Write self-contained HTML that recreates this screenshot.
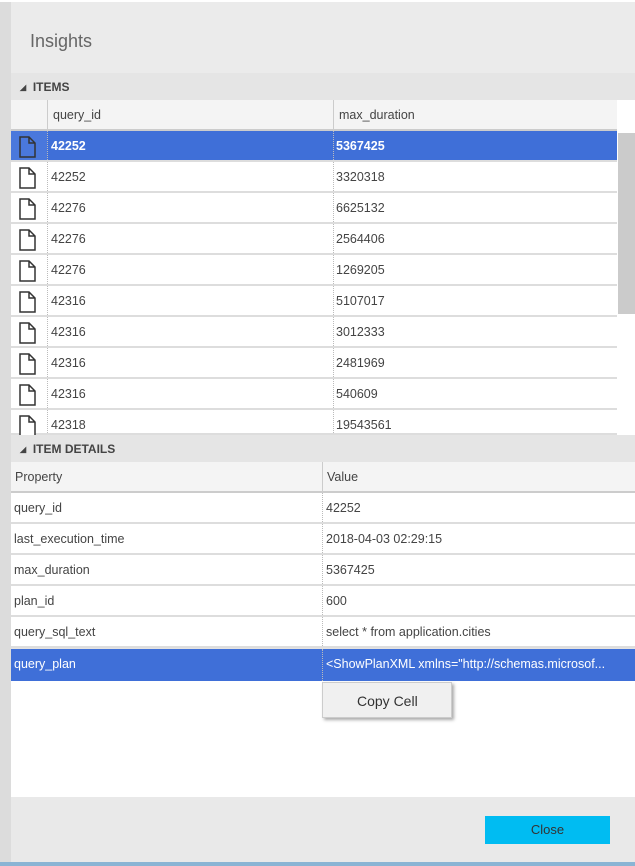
<!DOCTYPE html>
<html><head><style>
*{margin:0;padding:0;box-sizing:border-box}
body{width:635px;height:866px;overflow:hidden;background:#e2e2e2;font-family:"Liberation Sans",sans-serif;position:relative;font-size:12.5px;color:#444}
.a{position:absolute}
.row{position:absolute;left:11px;height:31px;background:#fff;border-bottom:2px solid #ddd}
.row span{position:absolute;top:8px}
.sel{background:#3f6fd8;color:#fff}
.ic{position:absolute;left:6px;top:4px}
.tri{font-size:8px;vertical-align:1px}
</style></head><body>
<div class="a" style="left:0;top:0;width:11px;height:866px;background:#dcdcdc"></div>
<div class="a" style="left:0;top:0;width:635px;height:2px;background:#fff"></div>
<div class="a" style="left:11px;top:2px;width:624px;height:71px;background:#ebebeb"></div>
<div class="a" style="left:30px;top:31px;font-size:18px;color:#666">Insights</div>
<div class="a" style="left:11px;top:73px;width:624px;height:27px;background:#e5e5e5"></div>
<div class="a" style="left:20px;top:80px;font-size:12px;font-weight:bold;color:#444"><span class="tri">◢</span>&nbsp; ITEMS</div>
<div class="a" style="left:11px;top:100px;width:606px;height:31px;background:#f4f4f4;border-bottom:2px solid #ccc"></div>
<div class="a" style="left:617px;top:100px;width:18px;height:31px;background:#fff"></div>
<div class="a" style="left:47px;top:100px;width:1px;height:31px;background:#ccc"></div>
<div class="a" style="left:333px;top:100px;width:1px;height:31px;background:#ccc"></div>
<div class="a" style="left:53px;top:108px">query_id</div>
<div class="a" style="left:339px;top:108px">max_duration</div>
<div id="items"></div>
<div class="a" style="left:617px;top:131px;width:18px;height:304px;background:#fff"></div>
<div class="a" style="left:618px;top:133px;width:17px;height:181px;background:#cbcbcb"></div>
<div class="a" style="left:11px;top:435px;width:624px;height:27px;background:#e5e5e5"></div>
<div class="a" style="left:20px;top:442px;font-size:12px;font-weight:bold;color:#444"><span class="tri">◢</span>&nbsp; ITEM DETAILS</div>
<div class="a" style="left:11px;top:462px;width:624px;height:31px;background:#f4f4f4;border-bottom:2px solid #ccc"></div>
<div class="a" style="left:322px;top:462px;width:1px;height:31px;background:#ccc"></div>
<div class="a" style="left:15px;top:470px">Property</div>
<div class="a" style="left:327px;top:470px">Value</div>
<div id="det"></div>
<div class="a" style="left:11px;top:681px;width:624px;height:116px;background:#fff"></div>
<div class="a" style="left:322px;top:682px;width:130px;height:36px;background:#f0f0f0;border:1px solid #ccc;box-shadow:2px 2px 3px #aaa;font-size:14px;color:#333;padding:10px 0 0 34px">Copy Cell</div>
<div class="a" style="left:11px;top:797px;width:624px;height:65px;background:#e9e9e9"></div>
<div class="a" style="left:485px;top:816px;width:125px;height:28px;background:#00bcf2;color:#333;text-align:center;line-height:28px;font-size:13px">Close</div>
<div class="a" style="left:0;top:862px;width:635px;height:4px;background:#8ab4d4"></div>
<script>
var q=[["42252","5367425"],["42252","3320318"],["42276","6625132"],["42276","2564406"],["42276","1269205"],["42316","5107017"],["42316","3012333"],["42316","2481969"],["42316","540609"],["42318","19543561"]];
var h="";
q.forEach(function(r,i){var t=131+i*31;var ht=i==9?25:31;
h+='<div class="row'+(i==0?' sel':'')+'" style="top:'+t+'px;width:606px;height:'+ht+'px">'+
'<div style="position:absolute;left:0;top:0;width:36px;height:100%;background:'+(i==0?'#4a78dc':'#fff')+'"></div>'+
'<svg class="ic" width="20" height="24"><path d="M3 2H12L18 8V22H3Z M12 2V8H18" fill="'+(i==0?'#4a78dc':'#fff')+'" stroke="#333" stroke-width="1.5"/></svg>'+
'<div style="position:absolute;left:36px;top:0;height:100%;border-left:1px dotted #bbb"></div>'+
'<div style="position:absolute;left:322px;top:0;height:100%;border-left:1px dotted #bbb"></div>'+
'<span style="left:40px;'+(i==0?'font-weight:bold':'')+'">'+r[0]+'</span><span style="left:325px;'+(i==0?'font-weight:bold':'')+'">'+r[1]+'</span></div>';});
document.getElementById("items").innerHTML=h;
var d=[["query_id","42252"],["last_execution_time","2018-04-03 02:29:15"],["max_duration","5367425"],["plan_id","600"],["query_sql_text","select * from application.cities"],["query_plan","&lt;ShowPlanXML xmlns=\"http://schemas.microsof..."]];
h="";
d.forEach(function(r,i){var t=493+i*31+(i==5?1:0);
h+='<div class="row'+(i==5?' sel':'')+'" style="top:'+t+'px;width:624px;'+(i==5?'height:32px;border:none':'')+'">'+
'<div style="position:absolute;left:311px;top:0;height:100%;border-left:1px dotted #bbb"></div>'+
'<span style="left:3px">'+r[0]+'</span><span style="left:315px">'+r[1]+'</span></div>';});
document.getElementById("det").innerHTML=h;
</script>
</body></html>
